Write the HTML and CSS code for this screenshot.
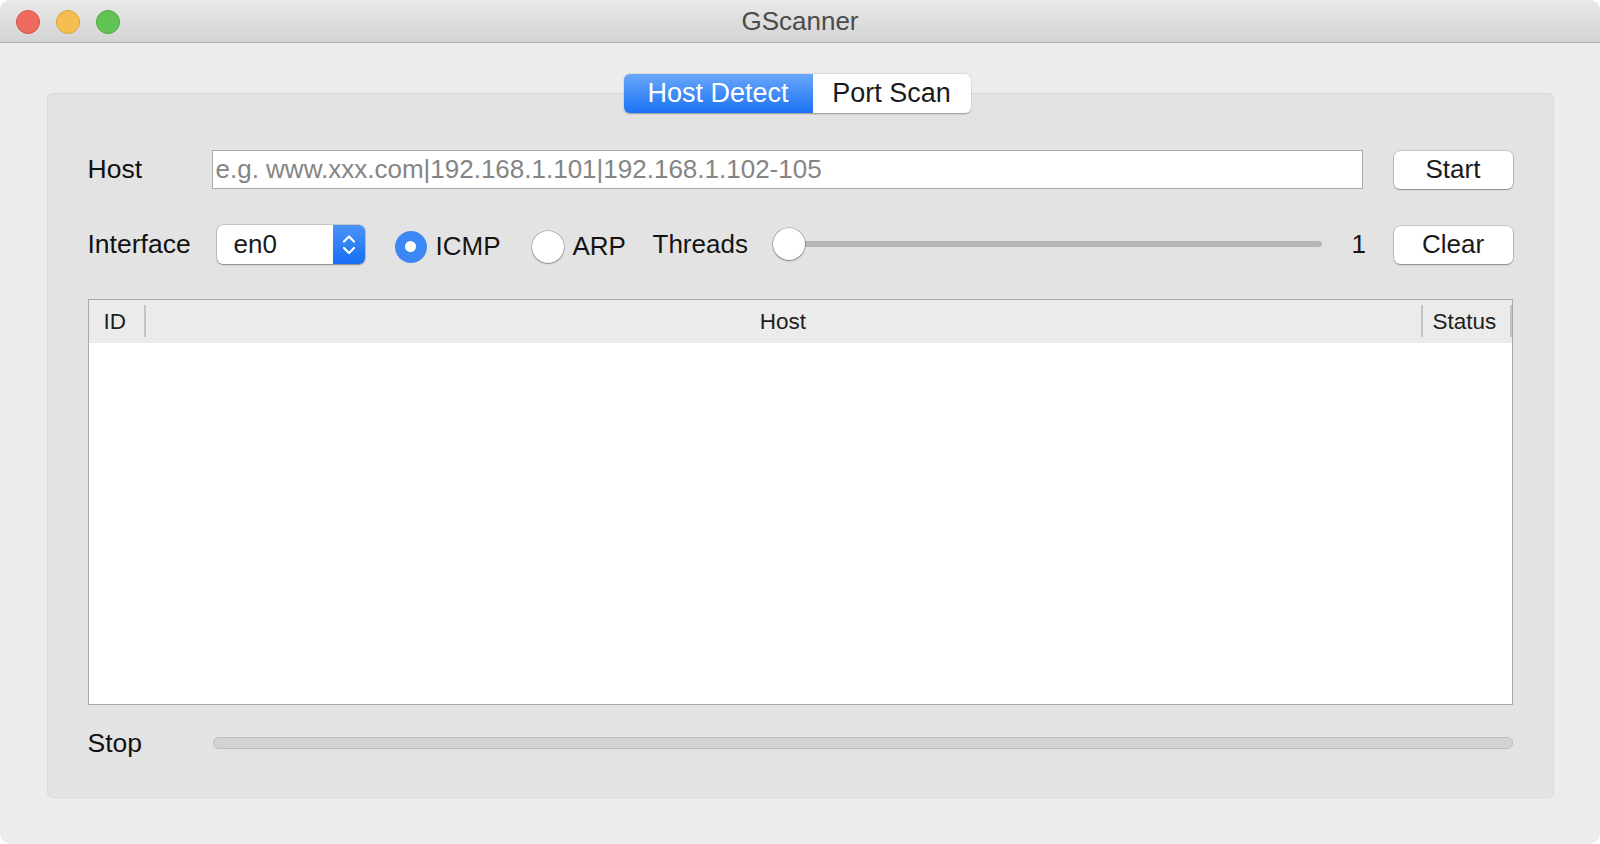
FILE: index.html
```html
<!DOCTYPE html>
<html>
<head>
<meta charset="utf-8">
<link rel="stylesheet" href="styles.css">
</head>
<body>
<div class="window">
  <div class="titlebar">
    <div class="lights">
      <span class="light red"></span>
      <span class="light yellow"></span>
      <span class="light green"></span>
    </div>
    <div class="title">GScanner</div>
  </div>
  <div class="content">
    <div class="tabs">
      <div class="tab active">Host Detect</div>
      <div class="tab">Port Scan</div>
    </div>
    <div class="group">
      <div class="row row-host">
        <div class="label">Host</div>
        <div class="input">e.g. www.xxx.com|192.168.1.101|192.168.1.102-105</div>
        <div class="btn">Start</div>
      </div>
      <div class="row row-iface">
        <div class="label label-iface">Interface</div>
        <div class="combo">
          <div class="combo-text">en0</div>
          <div class="combo-arrow">
            <svg width="32" height="39" viewBox="0 0 32 39">
              <path d="M11 16.5 L16 11.5 L21 16.5" fill="none" stroke="#fff" stroke-width="2.2" stroke-linecap="round" stroke-linejoin="round"/>
              <path d="M11 23 L16 28 L21 23" fill="none" stroke="#fff" stroke-width="2.2" stroke-linecap="round" stroke-linejoin="round"/>
            </svg>
          </div>
        </div>
        <div class="radio checked"><span class="dot"></span></div>
        <div class="radio-label label-icmp">ICMP</div>
        <div class="radio"></div>
        <div class="radio-label label-arp">ARP</div>
        <div class="label-threads">Threads</div>
        <div class="slider">
          <div class="track"></div>
          <div class="knob"></div>
        </div>
        <div class="value">1</div>
        <div class="btn">Clear</div>
      </div>
      <div class="table">
        <div class="thead">
          <div class="th th-id">ID</div>
          <div class="th th-host">Host</div>
          <div class="th th-status">Status</div>
        </div>
        <div class="tbody"></div>
      </div>
      <div class="row row-stop">
        <div class="label">Stop</div>
        <div class="progress"></div>
      </div>
    </div>
  </div>
</div>
</body>
</html>
```

FILE: styles.css
```css
html, body {
  margin: 0;
  padding: 0;
  background: #ffffff;
}
body {
  font-family: "Liberation Sans", Arial, sans-serif;
  color: #141414;
}
.window {
  width: 1600px;
  height: 844px;
  background: #ececec;
  border-radius: 10px;
  overflow: hidden;
  display: flex;
  flex-direction: column;
  box-sizing: border-box;
}
.titlebar {
  height: 43px;
  flex: none;
  box-sizing: border-box;
  background: linear-gradient(#e9e9e9, #d4d4d4);
  border-bottom: 1px solid #b3b3b3;
  position: relative;
  display: flex;
  align-items: center;
  justify-content: center;
}
.lights {
  position: absolute;
  left: 16px;
  top: 10px;
  display: flex;
  gap: 16px;
}
.light {
  width: 24px;
  height: 24px;
  border-radius: 50%;
  box-sizing: border-box;
}
.red { background: #ee6a5f; border: 1px solid #d5524a; }
.yellow { background: #f6bd4f; border: 1px solid #dca23a; }
.green { background: #5fc454; border: 1px solid #4aa83f; }
.title {
  font-size: 26px;
  color: #4b4b4b;
}
.content {
  flex: 1;
  display: flex;
  flex-direction: column;
  align-items: center;
  padding-top: 31px;
}
.tabs {
  display: flex;
  height: 39px;
  position: relative;
  z-index: 2;
  margin-left: -6px;
  border-radius: 6px;
  box-shadow: 0 0.5px 1.5px rgba(0,0,0,0.35);
}
.tab {
  height: 39px;
  box-sizing: border-box;
  display: flex;
  align-items: center;
  justify-content: center;
  font-size: 27px;
  background: #fff;
  color: #1a1a1a;
  width: 158px;
  border-radius: 0 6px 6px 0;
}
.tab.active {
  width: 189px;
  color: #fff;
  background: linear-gradient(#69a7fb, #1b72f4);
  border-radius: 6px 0 0 6px;
}
.group {
  width: 1507px;
  height: 705px;
  margin-top: -20px;
  box-sizing: border-box;
  background: #e3e3e3;
  border: 1px solid #d9d9d9;
  border-radius: 6px;
  padding: 56px 40px 0 40px;
  display: flex;
  flex-direction: column;
}
.row {
  display: flex;
  align-items: center;
  height: 39px;
}
.label {
  font-size: 26.5px;
  width: 124px;
  flex: none;
  color: #111;
}
.input {
  flex: 1;
  height: 39px;
  box-sizing: border-box;
  background: #fff;
  border: 1px solid #ababab;
  font-size: 26px;
  color: #858585;
  padding-left: 3px;
  display: flex;
  align-items: center;
  white-space: nowrap;
  overflow: hidden;
}
.btn {
  width: 119px;
  height: 38px;
  margin-left: 31px;
  flex: none;
  box-sizing: border-box;
  background: #fff;
  border-radius: 6px;
  box-shadow: 0 0 0 0.5px rgba(0,0,0,0.25), 0 1px 1.5px rgba(0,0,0,0.3);
  display: flex;
  align-items: center;
  justify-content: center;
  font-size: 26px;
  color: #1a1a1a;
}
.row-iface {
  margin-top: 36px;
}
.label-iface {
  width: 129px;
}
.combo {
  width: 148px;
  height: 39px;
  flex: none;
  display: flex;
  border-radius: 6px;
  overflow: hidden;
  box-shadow: 0 0 0 0.5px rgba(0,0,0,0.25), 0 1px 1.5px rgba(0,0,0,0.3);
  background: #fff;
}
.combo-text {
  flex: 1;
  font-size: 26px;
  padding-left: 17px;
  display: flex;
  align-items: center;
  color: #1a1a1a;
}
.combo-arrow {
  width: 32px;
  height: 39px;
  background: linear-gradient(#4b93f9, #176ef3);
}
.combo-arrow svg { display: block; }
.radio {
  width: 32px;
  height: 32px;
  border-radius: 50%;
  flex: none;
  box-sizing: border-box;
  background: #fff;
  box-shadow: 0 0 0 0.6px rgba(0,0,0,0.3), 0 1px 1.5px rgba(0,0,0,0.25);
  display: flex;
  align-items: center;
  justify-content: center;
  margin-top: 4px;
}
.radio.checked {
  background: #3d87f5;
  box-shadow: none;
  margin-left: 30px;
}
.radio .dot {
  width: 11px;
  height: 11px;
  border-radius: 50%;
  background: #fff;
}
.radio-label {
  font-size: 26px;
  margin-left: 9px;
  margin-top: 4px;
  flex: none;
  white-space: nowrap;
}
.label-icmp { width: 96px; }
.label-arp { width: 80px; }
.label-threads {
  font-size: 26px;
  width: 120px;
  flex: none;
}
.slider {
  position: relative;
  flex: 1;
  height: 39px;
}
.track {
  position: absolute;
  left: 8px;
  right: 0;
  top: 16px;
  height: 6px;
  border-radius: 3px;
  background: #b6b6b6;
}
.knob {
  position: absolute;
  left: 0;
  top: 3px;
  width: 32px;
  height: 32px;
  border-radius: 50%;
  background: #fff;
  box-shadow: 0 0 0 0.6px rgba(0,0,0,0.3), 0 1px 2px rgba(0,0,0,0.3);
}
.value {
  font-size: 26px;
  margin-left: 30px;
  width: 12px;
  flex: none;
}
.row-iface .btn {
  margin-left: 30px;
}
.table {
  margin-top: 35px;
  height: 406px;
  box-sizing: border-box;
  border: 1px solid #a9a9a9;
  background: #fff;
  display: flex;
  flex-direction: column;
}
.thead {
  height: 43px;
  flex: none;
  background: #ebebeb;
  display: flex;
  align-items: center;
}
.th {
  font-size: 22.5px;
  color: #1e1e1e;
  height: 100%;
  display: flex;
  align-items: center;
  box-sizing: border-box;
  position: relative;
}
.th-id {
  width: 57px;
  padding-left: 15px;
}
.th-host {
  flex: 1;
  justify-content: center;
}
.th-status {
  width: 91px;
  padding-left: 12px;
}
.th-id::after, .th-status::before, .th-status::after {
  content: "";
  position: absolute;
  top: 5px;
  bottom: 6px;
  width: 2px;
  background: #c4c4c4;
}
.th-id::after { right: 0; }
.th-status::before { left: 0; }
.th-status::after { right: 0; }
.tbody {
  flex: 1;
}
.row-stop {
  margin-top: 18px;
  height: 40px;
}
.progress {
  flex: 1;
  margin-left: 1px;
  height: 12px;
  box-sizing: border-box;
  background: #d3d3d3;
  border: 1px solid #bdbdbd;
  border-radius: 6px;
}
```
